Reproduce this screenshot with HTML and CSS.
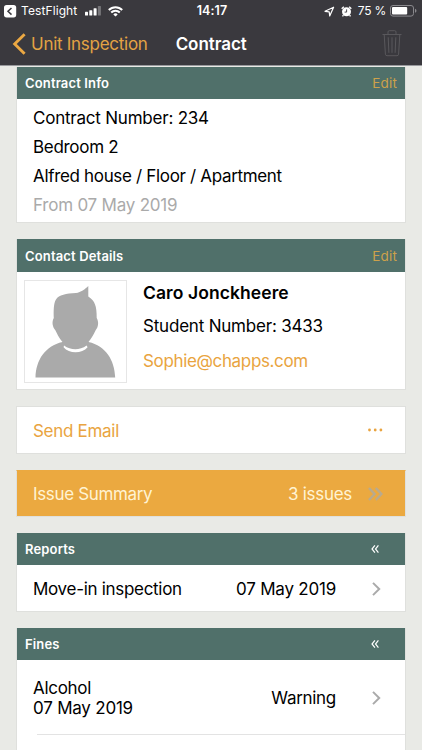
FILE: index.html
```html
<!DOCTYPE html>
<html lang="en">
<head>
<meta charset="utf-8">
<title>Contract</title>
<meta name="viewport" content="width=device-width">
<link rel="stylesheet" href="styles.css">
</head>
<body>
<header class="top">
  <div class="status">
    <div class="status-left">
      <svg class="back-app" width="13" height="13" viewBox="0 0 13 13"><rect width="12.2" height="12.4" rx="2.6" fill="#fff"/><path d="M7.5 3 4 6.3l3.5 3.3" fill="none" stroke="#3a393e" stroke-width="1.5"/></svg>
      <span class="app">TestFlight</span>
      <svg class="signal" width="16" height="10" viewBox="0 0 16 10" fill="#fff"><rect y="5.8" width="3" height="3.7" rx=".6"/><rect x="4.3" y="4.2" width="3" height="5.3" rx=".6"/><rect x="8.6" y="2.2" width="3" height="7.3" rx=".6"/><rect x="12.9" y="0" width="3" height="9.5" rx=".6" fill="#77767a"/></svg>
      <svg class="wifi" width="15" height="11" viewBox="0 0 15 11" fill="none" stroke="#fff" stroke-width="2"><path d="M.8 4a9.4 9.4 0 0 1 13.4 0M3.2 6.5a6 6 0 0 1 8.6 0"/><path d="M7.5 10.6 5.3 8.4a3.1 3.1 0 0 1 4.4 0z" fill="#fff" stroke="none"/></svg>
    </div>
    <span class="clock">14:17</span>
    <div class="status-right">
      <svg class="loc" width="11" height="11" viewBox="0 0 11 11" fill="none" stroke="#fff" stroke-width="1.2" stroke-linejoin="round"><path d="M9.6 1.2 1 5.3l4.2.5.5 4.2z"/></svg>
      <svg class="alarm" width="11" height="11" viewBox="0 0 11 11"><circle cx="5.5" cy="5.8" r="4.5" fill="#fff"/><path d="M.7 2.7 2.8.8M10.3 2.7 8.2.8M2.4 9.2l-.9 1.2M8.6 9.2l.9 1.2" stroke="#fff" stroke-width="1.4"/><path d="M5.6 3.4v2.7H3.6" fill="none" stroke="#3a393e" stroke-width=".9"/></svg>
      <span class="percent">75 %</span>
      <svg class="battery" width="27" height="12" viewBox="0 0 27 12"><rect x=".5" y=".5" width="23" height="10.6" rx="2.5" fill="none" stroke="#8a898d"/><rect x="2" y="2" width="15.2" height="7.6" rx="1" fill="#fff"/><path d="M25 3.8q1.5.6 1.5 2T25 7.8z" fill="#8a898d"/></svg>
    </div>
  </div>
  <nav class="nav">
    <svg class="back" width="14" height="22" viewBox="0 0 14 22"><path d="M12.6 1.2 2.7 11l9.9 9.8" fill="none" stroke="#eba843" stroke-width="2.9"/></svg>
    <span class="back-label">Unit Inspection</span>
    <h1 class="title">Contract</h1>
    <svg class="trash" width="20" height="27" viewBox="0 0 20 27" fill="none" stroke="#59585c" stroke-width="1"><path d="M.5 4.5h19M6 4V2q0-1.3 1.3-1.3h5.4Q14 .7 14 2v2M2.2 4.5l1.2 19.7q.1 1.5 1.6 1.5h10q1.5 0 1.6-1.5l1.2-19.7M6.2 7.3l.7 15.5M10 7.3v15.5M13.8 7.3l-.7 15.5"/></svg>
  </nav>
</header>
<main class="content">
  <section class="card info">
    <div class="head"><h2>Contract Info</h2><span class="edit">Edit</span></div>
    <div class="lines">
      <p class="number">Contract Number: 234</p>
      <p class="room">Bedroom 2</p>
      <p class="place">Alfred house / Floor / Apartment</p>
      <p class="from">From 07 May 2019</p>
    </div>
  </section>
  <section class="card contact">
    <div class="head"><h2>Contact Details</h2><span class="edit">Edit</span></div>
    <div class="person">
      <div class="avatar">
        <svg width="101" height="101" viewBox="0 0 101 101"><path fill="#aaa" d="M10.5 96.5C11 79 20 65 37.5 61C34 57 32 52.500 30.500 49.500C27.500 46 26.500 41 28.800 37C28.500 31 28.500 22 31 18.500C34 13.500 41 12.700 51 12C56 11.500 60 8 63.300 5V15.500C70 20 71.800 25 71.700 37C74 41 73.500 46 70.500 49.500C68.500 54 66 58 63.500 61C81 65 89.500 79 90.200 96.500Z"/><path fill="#fff" d="M39 64.400C46 69.500 54.500 69.500 61.600 64.400L62.600 66.300C57 73 44 73 38.600 66.300Z"/></svg>
      </div>
      <div class="who">
        <p class="name">Caro Jonckheere</p>
        <p class="student">Student Number: 3433</p>
        <p class="mail">Sophie@chapps.com</p>
      </div>
    </div>
  </section>
  <section class="card row send"><span>Send Email</span>
    <svg class="dots" width="15" height="4" viewBox="0 0 15 4" fill="#e9a440"><circle cx="1.5" cy="2" r="1.4"/><circle cx="7.2" cy="2" r="1.4"/><circle cx="12.9" cy="2" r="1.4"/></svg>
  </section>
  <section class="card row issue"><span class="issue-label">Issue Summary</span><span class="count">3 issues</span>
    <svg class="double" width="15" height="14" viewBox="0 0 15 14" fill="none" stroke="#b9aa8d" stroke-width="2.5"><path d="M1 1l5.600 6L1 13M7.800 1l5.600 6-5.600 6"/></svg>
  </section>
  <section class="card reports">
    <div class="head"><h2>Reports</h2><svg class="fold" width="8" height="8" viewBox="0 0 8 8"><path d="M3.900.4 1 4l2.900 3.600M7.400.4 4.500 4l2.900 3.600"/></svg></div>
    <div class="row"><span class="move">Move-in inspection</span><span class="date">07 May 2019</span><svg class="chevron" width="9" height="14" viewBox="0 0 9 14"><path d="M1 .9 7.200 7 1 13.100"/></svg></div>
  </section>
  <section class="card fines">
    <div class="head"><h2>Fines</h2><svg class="fold" width="8" height="8" viewBox="0 0 8 8"><path d="M3.900.4 1 4l2.900 3.600M7.400.4 4.500 4l2.900 3.600"/></svg></div>
    <div class="row fine"><div class="fine-text"><p>Alcohol</p><p class="date">07 May 2019</p></div><span class="warning">Warning</span><svg class="chevron" width="9" height="14" viewBox="0 0 9 14"><path d="M1 .9 7.200 7 1 13.100"/></svg></div>
  </section>
</main>
</body>
</html>
```
FILE: styles.css
```css
* { box-sizing: border-box; }
body { margin: 0; width: 422px; height: 750px; overflow: hidden; background: #e9eae6; color: #000; font: 17px/20px Inter, "Liberation Sans", sans-serif; letter-spacing: -.3px; }
h1, h2, p { margin: 0; font-size: inherit; }
span, h1, h2, p { white-space: nowrap; }
svg { display: block; flex: none; }

.top { height: 66px; background: #3a393e; border-bottom: 1px solid #98999d; color: #fff; }
.status { height: 22px; display: grid; grid-template-columns: 1fr auto 1fr; align-items: center; padding: 0 5px 0 4px; font-size: 12px; line-height: 22px; letter-spacing: 0; }
.status-left, .status-right { display: flex; align-items: center; }
.status-right { justify-content: flex-end; }
.app { margin-left: 4px; letter-spacing: .1px; }
.signal { margin-left: 8px; }
.wifi { margin-left: 7px; }
.clock { font-weight: 600; font-size: 12.5px; padding-left: 3px; letter-spacing: .1px; }
.alarm { margin-left: 6px; }
.percent { margin: 0 4px 0 6px; letter-spacing: -.2px; }
.nav { height: 43px; display: flex; align-items: center; padding: 0 20px 0 12px; }
.back-label { margin-left: 5px; color: #e3a344; letter-spacing: -.27px; }
.title { margin-left: 28px; font-weight: 600; letter-spacing: -.05px; }
.trash { margin-left: auto; }

.content { padding: 1px 16px 0; display: flex; flex-direction: column; gap: 16px; }
.card { background: #fff; border: 1px solid #dfe0dd; }
.head { height: 32px; margin: -1px 0 0; padding: 0 8px 0 8px; display: flex; align-items: center; justify-content: space-between; background: #50706a; color: #fff; font-size: 13px; letter-spacing: .15px; }
.head h2 { font-weight: 600; }
.edit { color: #cda14b; font-size: 13.5px; }
.fold { margin-right: 18px; fill: none; stroke: #fff; stroke-width: 1.2; }
.info { height: 156px; }
.lines { padding: 5px 16px; line-height: 29px; }
.number, .from { letter-spacing: -.22px; }
.place { letter-spacing: -.33px; }
.from { color: #aaa; }
.contact { height: 151px; }
.contact .head { height: 33px; }
.person { display: flex; padding: 8px 7px; }
.avatar { width: 103px; height: 103px; border: 1px solid #e6e6e6; overflow: hidden; }
.who { margin-left: 16px; padding-top: 3px; }
.name { font-size: 17.5px; font-weight: 600; letter-spacing: .08px; margin-bottom: 13px; }
.student { margin-bottom: 15px; letter-spacing: -.2px; }
.mail { color: #e9a440; letter-spacing: -.35px; }
.row { display: flex; align-items: center; padding: 0 22px 0 16px; height: 46px; }
.send { height: 48px; color: #e9a440; }
.send span { padding-top: 1px; }
.dots { margin-left: auto; }
.issue { height: 47px; background: #eba940; border-top-color: #eba940; color: #fff3d2; }
.issue-label { letter-spacing: -.35px; }
.count { margin-left: auto; }
.double { margin-left: 16px; }
.reports { height: 79px; }
.reports .row { padding-top: 2px; }
.row .chevron { fill: none; stroke: #aaa; stroke-width: 2; margin: 0 2px 0 36px; }
.date { letter-spacing: -.22px; }
.reports .date, .warning { margin-left: auto; }
.fines { height: 130px; }
.fine { height: 75px; margin-left: 20px; padding-left: 0; padding-top: 2px; border-bottom: 1px solid #e3e3e3; }
.fine-text { margin-left: -4px; }
```
